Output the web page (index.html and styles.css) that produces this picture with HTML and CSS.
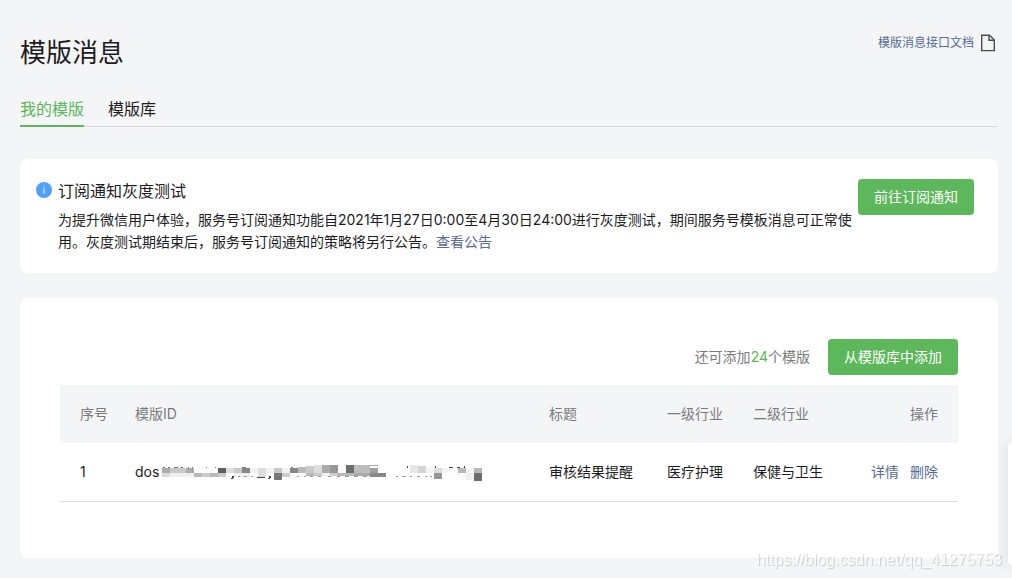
FILE: index.html
```html
<!DOCTYPE html>
<html lang="zh-CN">
<head>
    <meta charset="UTF-8">
    <meta name="viewport" content="width=device-width, initial-scale=1.0">
    <title>模版消息</title>
    <link rel="stylesheet" href="styles.css">
</head>
<body>
    <header class="page-header">
        <h1>模版消息</h1>
        <a class="doc-link" href="#doc">
            <span>模版消息接口文档</span>
            <svg width="16" height="18" viewBox="0 0 16 18" fill="none" stroke="#4a4c4f" stroke-width="1.4">
                <path d="M1.7 1.2H9.5L14.3 6V16.6H1.7Z"/>
                <path d="M9 1.2V6.3H14.3"/>
            </svg>
        </a>
    </header>

    <nav class="tabs">
        <a class="tab active" href="#mine">我的模版</a>
        <a class="tab" href="#library">模版库</a>
    </nav>

    <main>
        <section class="card notice">
            <svg class="notice-icon" width="16" height="16" viewBox="0 0 16 16">
                <circle cx="8" cy="8" r="8" fill="#4fa1fb"/>
                <path d="M7.3 4.3H8.7V5.6H7.3ZM7.3 6.6H8.7V11.6H7.3Z" fill="#c4e0fe"/>
            </svg>
            <div class="notice-body">
                <h2>订阅通知灰度测试</h2>
                <p>为提升微信用户体验，服务号订阅通知功能自2021年1月27日0:00至4月30日24:00进行灰度测试，期间服务号模板消息可正常使用。灰度测试期结束后，服务号订阅通知的策略将另行公告。<a href="#announcement">查看公告</a></p>
            </div>
            <button class="btn" type="button">前往订阅通知</button>
        </section>

        <section class="card templates">
            <div class="toolbar">
                <span class="quota">还可添加<em>24</em>个模版</span>
                <button class="btn" type="button">从模版库中添加</button>
            </div>
            <table>
                <thead>
                    <tr>
                        <th class="col-no">序号</th>
                        <th>模版ID</th>
                        <th class="col-title">标题</th>
                        <th class="col-primary">一级行业</th>
                        <th class="col-secondary">二级行业</th>
                        <th class="col-action">操作</th>
                    </tr>
                </thead>
                <tbody>
                    <tr>
                        <td>1</td>
                        <td>
                            <div class="template-id">
                                <span>dos</span>
                                <!-- masked part of the ID -->
                                <svg width="322" height="18" viewBox="0 0 322 18" shape-rendering="crispEdges">
                                    <!-- upper row of blocks -->
                                    <path fill="#ababab" d="M1 5h8v5h-8zM25 5h8v5h-8zM161 2h8v8h-8z"/>
                                    <path fill="#c9c9c9" d="M9 5h16v5h-16zM73 5h8v5h-8zM113 5h8v5h-8zM145 3h8v7h-8z"/>
                                    <path fill="#5f5f5f" d="M57 5h8v5h-8z"/>
                                    <path fill="#dedede" d="M65 5h8v5h-8zM97 5h8v5h-8zM153 2h8v8h-8z"/>
                                    <path fill="#888" d="M81 5h8v5h-8zM129 5h8v5h-8z"/>
                                    <path fill="#f2f2f2" d="M89 5h8v5h-8zM105 5h8v5h-8zM121 5h8v5h-8z"/>
                                    <path fill="#bbb" d="M137 4h8v6h-8z"/>
                                    <path fill="#969896" d="M169 2h8v8h-8z"/>
                                    <path fill="#6a6e6d" d="M185 2h8v8h-8z"/>
                                    <path fill="#bdbdbd" d="M193 2h16v8h-16z"/>
                                    <path fill="#a0a0a0" d="M209 5h8v5h-8zM209 2h8v1h-8z"/>
                                    <path fill="#e8e8e8" d="M249 2h8v8h-8z"/>
                                    <path fill="#d3d3d3" d="M257 3h8v7h-8z"/>
                                    <path fill="#f5f5f5" d="M265 4h8v6h-8zM281 5h8v5h-8zM305 5h8v5h-8z"/>
                                    <path fill="#ddd" d="M273 5h8v5h-8z"/>
                                    <path fill="#b8b8b8" d="M297 5h8v5h-8zM313 5h8v5h-8z"/>
                                    <!-- lower row of blocks -->
                                    <path fill="#dcdcdc" d="M1 10h8v4h-8zM97 10h8v4h-8z"/>
                                    <path fill="#f0f0f0" d="M9 10h24v4h-24zM73 10h16v4h-16zM161 10h8v3h-8zM305 10h8v7h-8z"/>
                                    <path fill="#b8b8b8" d="M33 10h8v4h-8zM49 10h8v4h-8zM145 10h8v3h-8zM177 10h16v3h-16z"/>
                                    <path fill="#cbcbcb" d="M41 10h8v4h-8zM57 10h8v4h-8zM121 10h8v4h-8zM153 10h8v3h-8zM169 10h8v3h-8z"/>
                                    <path fill="#777" d="M113 10h8v7h-8z"/>
                                    <path fill="#aaa" d="M193 10h16v3h-16z"/>
                                    <path fill="#888" d="M209 10h16v4h-16z"/>
                                    <path fill="#969696" d="M273 10h8v6h-8z"/>
                                    <path fill="#fafafa" d="M297 10h8v7h-8z"/>
                                    <path fill="#6c6e6d" d="M313 10h8v8h-8z"/>
                                    <!-- letter edges left uncovered -->
                                    <path fill="#777" d="M2 4h2v1h-2zM7 4h2v1h-2zM13 4h4v1h-4zM20 4h2v1h-2zM27 4h1v1h-1zM31 4h1v1h-1zM45 4h1v1h-1zM54 4h1v1h-1zM81 4h4v1h-4zM130 4h2v1h-2z"/>
                                    <path fill="#444" d="M71 13h2v2h-2zM70 15h2v1h-2zM96 14h8v1h-8zM108 13h2v2h-2zM107 15h2v1h-2zM246 3h1v2h-1zM274 3h1v2h-1zM288 4h4v1h-4zM296 4h3v1h-3zM303 3h1v2h-1z"/>
                                    <path fill="#999" d="M77 13h2v1h-2zM83 13h3v1h-3zM90 13h2v1h-2zM136 13h2v1h-2zM143 13h2v1h-2zM149 13h3v1h-3zM157 13h3v1h-3zM167 13h3v1h-3zM176 13h3v1h-3zM184 13h4v1h-4zM193 13h4v1h-4zM202 13h4v1h-4zM235 13h2v1h-2zM241 13h4v1h-4zM249 13h2v1h-2zM256 13h3v1h-3zM264 13h2v1h-2zM269 13h2v1h-2z"/>
                                </svg>
                            </div>
                        </td>
                        <td>审核结果提醒</td>
                        <td>医疗护理</td>
                        <td>保健与卫生</td>
                        <td class="col-action">
                            <div class="actions">
                                <a href="#detail">详情</a>
                                <a href="#delete">删除</a>
                            </div>
                        </td>
                    </tr>
                </tbody>
            </table>
        </section>
    </main>

    <aside class="side-panel"></aside>
    <div class="watermark">https://blog.csdn.net/qq_41275753</div>
</body>
</html>
```
FILE: styles.css
```css
* {
    box-sizing: border-box;
}
body {
    margin: 0;
    padding: 33px 14px 20px 20px;
    background: #f4f5f7;
    color: #1c1c1e;
    font-family: Inter, "Noto Sans CJK SC", sans-serif;
    font-size: 14px;
    line-height: 22px;
    overflow-x: hidden;
}
h1, h2, p {
    margin: 0;
    font-weight: 400;
}
a {
    color: #576b95;
    text-decoration: none;
}
.page-header {
    display: flex;
    justify-content: space-between;
    align-items: flex-start;
}
.page-header h1 {
    font-size: 26px;
    line-height: 40px;
}
.doc-link {
    display: flex;
    align-items: center;
    gap: 6px;
    padding-right: 2px;
    font-size: 12px;
    line-height: 20px;
}
.tabs {
    display: flex;
    gap: 24px;
    margin-top: 24px;
    box-shadow: inset 0 -1px #d9dadc;
}
.tab {
    padding-bottom: 4px;
    border-bottom: 2px solid transparent;
    color: #1c1c1e;
    font-size: 16px;
    line-height: 24px;
}
.tab.active {
    border-color: #5cb85a;
    color: #5cb85a;
}
.card {
    border-radius: 8px;
    background: #fff;
}
.btn {
    height: 36px;
    padding: 0 16px;
    border: 0;
    border-radius: 4px;
    background: #5cb85a;
    color: #fff;
    font: inherit;
    white-space: nowrap;
}
.notice {
    display: flex;
    align-items: flex-start;
    margin-top: 32px;
    padding: 20px 24px 20px 16px;
}
.notice-icon {
    flex: none;
    margin: 3px 6px 0 0;
}
.notice-body {
    flex: 1;
}
.notice-body h2 {
    margin-bottom: 6px;
    font-size: 16px;
    line-height: 24px;
}
.templates {
    margin-top: 25px;
    padding: 41px 40px 56px;
}
.toolbar {
    display: flex;
    justify-content: flex-end;
    align-items: center;
    gap: 18px;
    margin-bottom: 10px;
}
.quota {
    color: #7a7b7d;
}
.quota em {
    color: #5cb85a;
    font-style: normal;
}
table {
    width: 100%;
    border-collapse: collapse;
    table-layout: fixed;
}
th, td {
    height: 58px;
    padding: 0 0 0 20px;
    font-weight: 400;
    text-align: left;
    white-space: nowrap;
}
th {
    background: #f4f5f7;
    color: #7a7b7d;
}
td {
    border-bottom: 1px solid #dcdddf;
}
.col-no {
    width: 55px;
}
.col-title {
    width: 118px;
}
.col-primary {
    width: 86px;
}
.col-secondary {
    width: 112px;
}
.col-action {
    width: 113px;
    padding: 0 20px 0 0;
    text-align: right;
}
.template-id {
    display: flex;
    align-items: center;
    gap: 2px;
}
.actions {
    display: flex;
    justify-content: flex-end;
    gap: 11px;
}
.side-panel {
    position: fixed;
    right: -8px;
    bottom: 12px;
    width: 12px;
    height: 125px;
    border-radius: 8px;
    background: #fff;
    box-shadow: 0 0 16px rgba(0, 0, 0, 0.12);
}
.watermark {
    position: fixed;
    right: 10px;
    bottom: 7px;
    color: rgba(255, 255, 255, 0.8);
    font-family: "Liberation Sans", Arial, sans-serif;
    font-size: 16px;
    text-shadow: 1px 1px 1px rgba(0, 0, 0, 0.18);
}
```
